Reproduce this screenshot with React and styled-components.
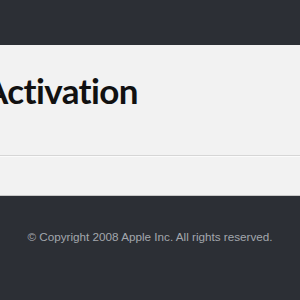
import styled, { createGlobalStyle } from 'styled-components'

const Global = createGlobalStyle`
  html, body {
    margin: 0;
    padding: 0;
    background: #2c2f35;
  }
  #root {
    width: 300px;
    height: 300px;
    overflow: hidden;
  }
`

const Page = styled.div`
  display: flex;
  flex-direction: column;
  height: 300px;
  background: #2c2f35;
  padding-top: 45px;
  box-sizing: border-box;
`

const Panel = styled.div`
  background: #f2f2f2;
  border-bottom: 1px solid #c8c8c8;
  height: 151px;
  box-sizing: border-box;
  display: flex;
  flex-direction: column;
`

const Header = styled.div`
  height: 111px;
  border-bottom: 1px solid #d6d6d6;
  box-shadow: 0 1px 0 #fbfbfb;
  box-sizing: border-box;
  padding-top: 25px;
`

const Title = styled.h1`
  margin: 0 0 0 -16px;
  font-family: Lato, 'Open Sans', sans-serif;
  font-weight: 700;
  font-size: 35px;
  line-height: 40px;
  letter-spacing: -0.6px;
  color: #111;
`

const Footer = styled.div`
  padding-top: 34px;
  text-align: center;
  font-family: 'Liberation Sans', Arial, sans-serif;
  font-size: 11.7px;
  color: #a3a7ad;
`

export default function App() {
  return (
    <>
      <Global />
      <Page>
        <Panel>
          <Header>
            <Title>Activation</Title>
          </Header>
        </Panel>
        <Footer>© Copyright 2008 Apple Inc. All rights reserved.</Footer>
      </Page>
    </>
  )
}
